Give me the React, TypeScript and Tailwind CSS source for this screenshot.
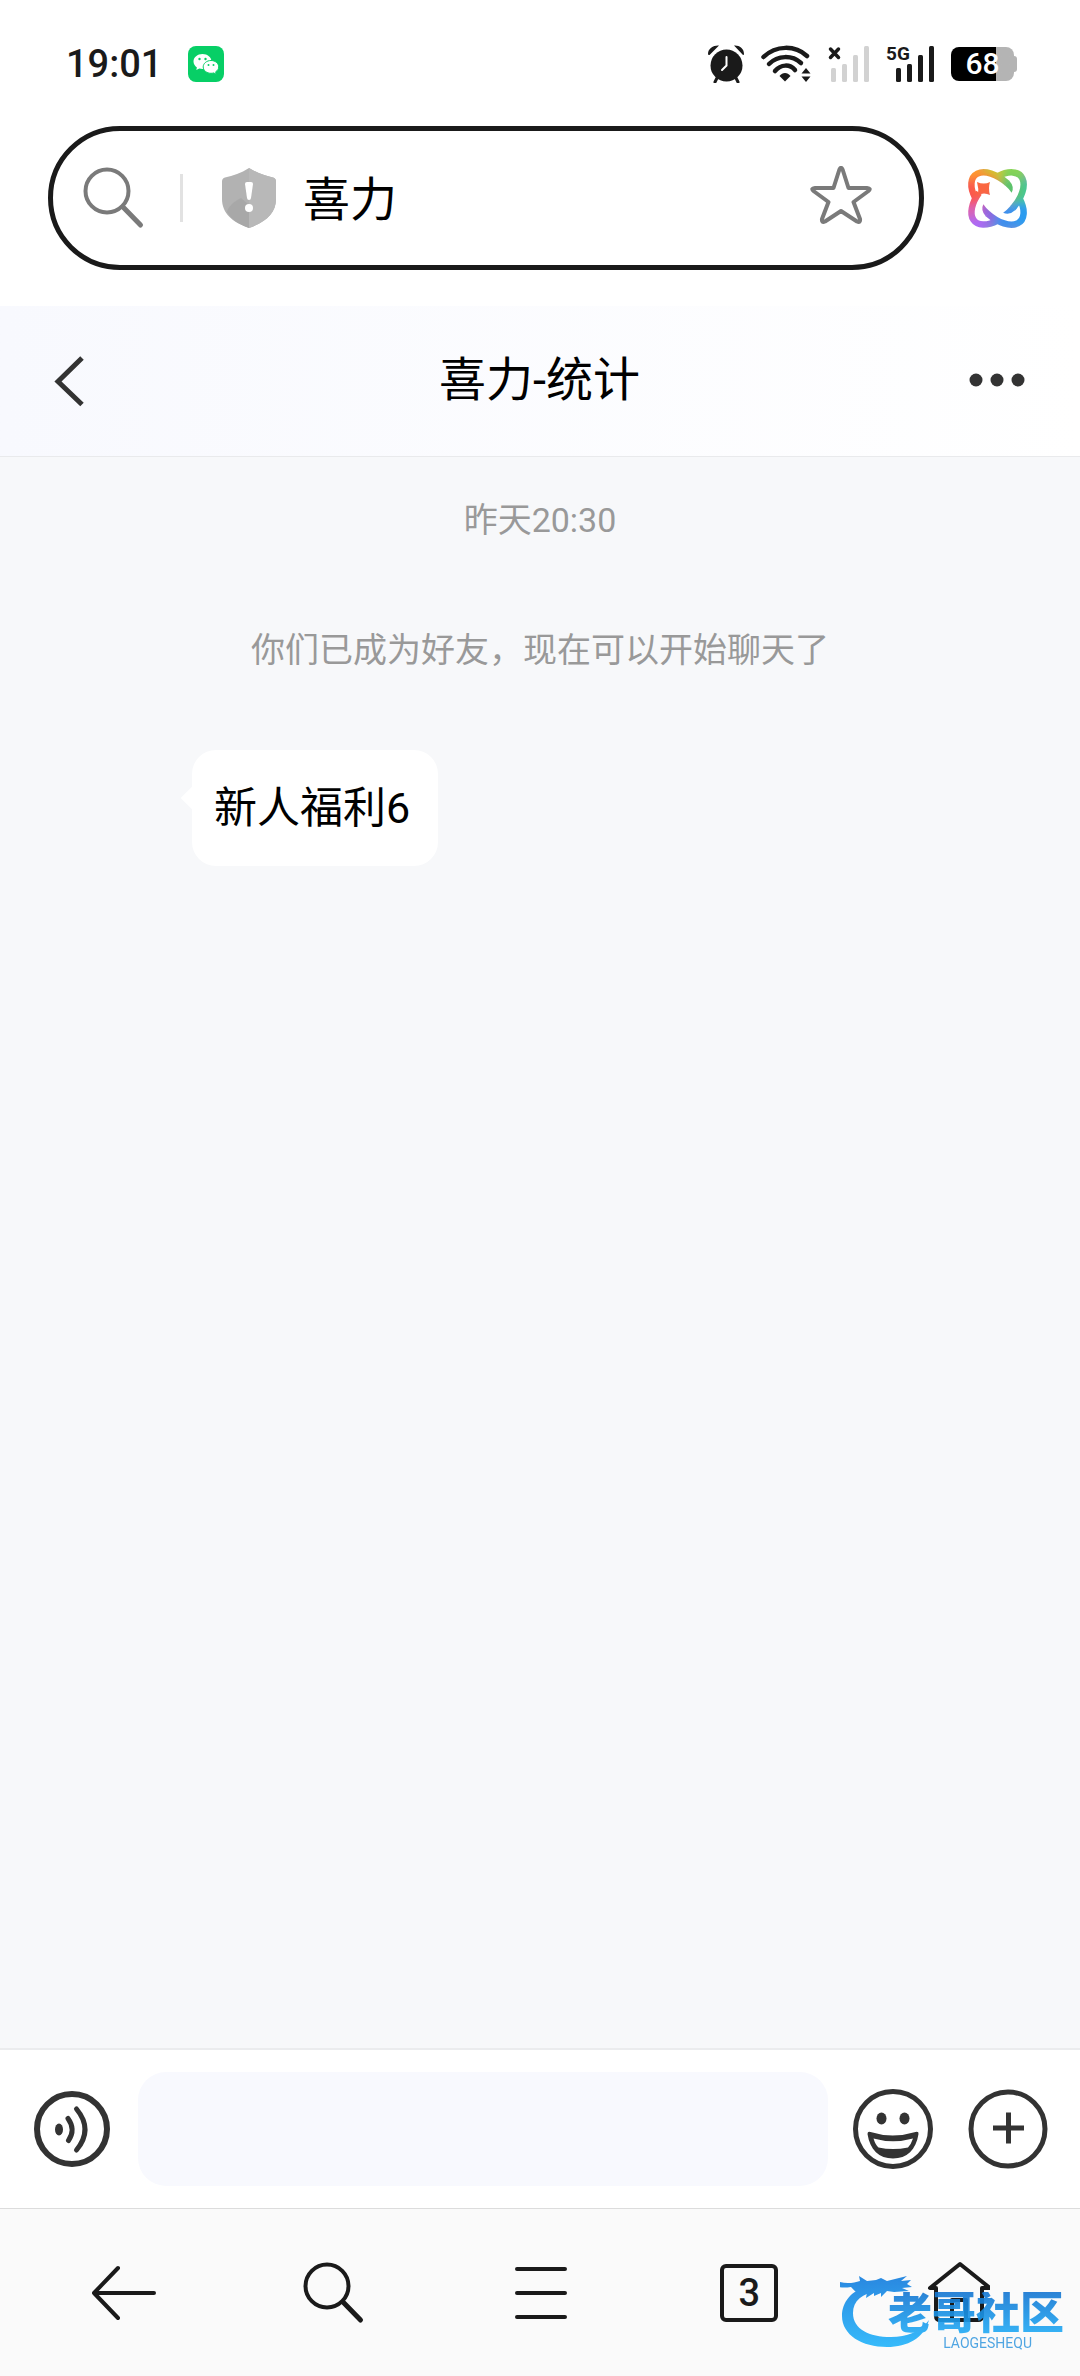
import { useState } from 'react';

function WeChatIcon() {
  return (
    <svg viewBox="0 0 36 36" className="w-9 h-9" aria-hidden="true">
      <rect width="36" height="36" rx="8" fill="#07cf66" />
      <path d="M14.500 8C9.500 8 5.500 11.300 5.500 15.500c0 2.400 1.300 4.500 3.400 5.900L8.300 24l3-1.500c1 .3 2.100.5 3.200.5 5 0 9-3.300 9-7.500S19.500 8 14.500 8z" fill="#fff" />
      <path d="M23 14.500c-4.300 0-7.800 2.900-7.800 6.400s3.500 6.400 7.800 6.400c.9 0 1.800-.1 2.600-.4l2.600 1.300-.5-2.400c1.800-1.200 3-2.900 3-4.900 0-3.500-3.400-6.400-7.700-6.400z" fill="#fff" stroke="#07cf66" strokeWidth="1" />
      <g fill="#07cf66">
        <circle cx="11.500" cy="13" r="1.200" />
        <circle cx="17.500" cy="13" r="1.200" />
        <circle cx="20.500" cy="19" r="1" />
        <circle cx="25.500" cy="19" r="1" />
      </g>
    </svg>
  );
}

function AlarmIcon() {
  return (
    <svg viewBox="0 0 36 38" className="w-9 h-[38px]" aria-hidden="true">
      <path d="M9 33l-2 4M28 33l2 4" stroke="#1a1a1a" strokeWidth="3" strokeLinecap="round" />
      <circle cx="18.500" cy="20.500" r="16" fill="#1a1a1a" />
      <path d="M0 9C0 3 6 0 11 .5L1.500 10C.5 10 0 9.700 0 9zM36 9c0-6-5-9-10-8.500L35 10c.7 0 1-.5 1-1z" fill="#1a1a1a" />
      <path d="M18.500 12v8.500L14 25" fill="none" stroke="#fff" strokeWidth="2" strokeLinecap="round" />
    </svg>
  );
}

function WifiIcon() {
  return (
    <svg viewBox="0 0 50 38" className="w-[50px] h-[38px]" aria-hidden="true">
      <g fill="none" stroke="#1a1a1a" strokeWidth="4.500" strokeLinecap="round">
        <path d="M2.500 12C15 0 34 0 46 11" />
        <path d="M8 19C17 10 31 10 40 18" />
        <path d="M14 26C20 19 29 19 34 25" />
      </g>
      <path d="M18.500 31c3-4 8-4 11 0L24 36.500z" fill="#1a1a1a" />
      <path d="M40.500 28.500L45 23l4.500 5.500zM40.500 31.500h9L45 37z" fill="#1a1a1a" />
    </svg>
  );
}

function SignalBars() {
  return (
    <>
      <rect y="22" width="5" height="14" rx="1.500" />
      <rect x="11" y="18" width="5" height="18" rx="1.500" />
      <rect x="22" y="9" width="5" height="27" rx="1.500" />
      <rect x="33" width="5" height="36" rx="1.500" />
    </>
  );
}

function NoSignalIcon() {
  return (
    <svg viewBox="0 0 41 38" className="w-[41px] h-[38px]" aria-hidden="true">
      <g transform="translate(3 1)" fill="#d2d2d2"><SignalBars /></g>
      <path d="M2.500 4l8 8.500M10.500 4l-8 8.500" stroke="#1a1a1a" strokeWidth="3.500" strokeLinecap="round" />
    </svg>
  );
}

function SignalIcon() {
  return (
    <svg viewBox="0 0 48 38" className="w-12 h-[38px] overflow-visible" aria-label="5G">
      <g transform="translate(10 1)" fill="#1a1a1a"><SignalBars /></g>
      <text x="0" y="15" fontSize="19" fontWeight="700" fill="#1a1a1a" stroke="#fff" strokeWidth="2" paintOrder="stroke" className="font-['Roboto',sans-serif]">5G</text>
    </svg>
  );
}

function Battery() {
  return (
    <div className="flex items-center">
      <div className="w-[63px] h-[34px] rounded-lg bg-linear-to-r from-black from-72% to-[#b4b4b4] to-72% flex items-center justify-center text-white text-[30px] leading-8 font-medium">
        68
      </div>
      <div className="w-[3px] h-4 bg-[#b4b4b4] rounded-r-md" />
    </div>
  );
}

function SearchIcon({ width }: { width: number }) {
  return (
    <svg viewBox="0 0 64 64" className="w-16 h-16" fill="none" stroke="currentColor" strokeLinecap="round" aria-hidden="true">
      <circle cx="26" cy="25" r="21.500" strokeWidth={width} />
      <path d="M42 41l17.500 18" strokeWidth={width + 1} />
    </svg>
  );
}

function ShieldIcon() {
  return (
    <svg viewBox="0 0 56 62" className="w-14 h-[62px]" aria-hidden="true">
      <path d="M28 1c8 5 16 8 24 9.500q3 .8 3 4V32c0 14-10 23-27 29C11 55 1 46 1 32V14.500q0-3.200 3-4C12 9 20 6 28 1z" fill="#b2b2b2" />
      <path d="M28 1c8 5 16 8 24 9.500q3 .8 3 4V32c0 14-10 23-27 29z" fill="#b8b8b8" />
      <path d="M20 31c-8 4-13 9-14 14 4 7 11 12 22 16V38z" fill="#a8a8a8" />
      <path d="M24 17q0-2 2-2h4q2 0 2 2l-2 14q-.3 2-2 2t-2-2z" fill="#fff" />
      <circle cx="28" cy="41" r="4" fill="#fff" />
    </svg>
  );
}

function StarIcon() {
  return (
    <svg viewBox="0 3 64 64" className="w-16 h-16" aria-hidden="true">
      <path d="M30.400 6.500q1.600-3.500 3.200 0L39.500 25H58q4.500.4 1.500 3L44.500 39 51 56q.6 4-3 2.500L32 48 16 58.500q-3.600 1.500-3-2.500l6.500-17L4.500 28Q1.500 25.400 6 25h18.500z" fill="none" stroke="#7a7a7a" strokeWidth="4" strokeLinejoin="round" />
    </svg>
  );
}

const logoColors = [
  { x: 18, y: 16, c: '#ff9a2e' },
  { x: 40, y: 16, c: '#d3c32c' },
  { x: 58, y: 14, c: '#86d455' },
  { x: 68, y: 34, c: '#42c99a' },
  { x: 54, y: 32, c: '#5cc26c' },
  { x: 66, y: 58, c: '#2a9cf0' },
  { x: 48, y: 60, c: '#3b90ee' },
  { x: 28, y: 56, c: '#8d66dd' },
  { x: 18, y: 66, c: '#ab6af5' },
  { x: 14, y: 48, c: '#d765b8' },
  { x: 16, y: 34, c: '#fb5550' },
  { x: 30, y: 30, c: '#fa6541' },
];

// One lobe of the crossed orbits: an elliptic arc that ends in a tapered tip
function OrbitLobe() {
  return (
    <>
      <path d="M-15.600 15.600A32.200 17.800 0 0 1 -4 -17.700" fill="none" stroke="#fff" strokeWidth="6.500" />
      <path d="M-4.500 -20.900Q4 -20.500 6 -14Q2 -15 -4.500 -14.500z" fill="#fff" />
    </>
  );
}

function OrbitLogo() {
  return (
    <svg viewBox="0 0 80 80" className="w-20 h-20" aria-hidden="true">
      <defs>
        <filter id="soften" x="-20%" y="-20%" width="140%" height="140%">
          <feGaussianBlur stdDeviation="4" />
        </filter>
        <mask id="orbits" maskUnits="userSpaceOnUse" x="0" y="0" width="80" height="80">
          <g transform="translate(41.500 40.500)">
            <g transform="rotate(45)"><OrbitLobe /></g>
            <g transform="rotate(135)"><OrbitLobe /></g>
            <g transform="rotate(225)"><OrbitLobe /></g>
            <path transform="rotate(-45)" d="M-15.600 15.600A32.200 17.800 0 0 1 -9 -17.100" fill="none" stroke="#fff" strokeWidth="6.500" />
          </g>
          <path d="M21 24q7 3 13 0-2 6 0 13-6-3-12 0 1-6-1-13z" fill="#fff" />
        </mask>
      </defs>
      <g mask="url(#orbits)">
        <rect width="80" height="80" fill="#8a8fd0" />
        <g filter="url(#soften)">
          {logoColors.map((p) => (
            <circle key={p.c} cx={p.x} cy={p.y} r="13" fill={p.c} />
          ))}
        </g>
      </g>
    </svg>
  );
}

function VoiceIcon() {
  return (
    <svg viewBox="0 0 76 76" className="w-[76px] h-[76px]" fill="none" stroke="#333" aria-hidden="true">
      <circle cx="38" cy="38" r="35" strokeWidth="6" />
      <ellipse cx="25" cy="38.500" rx="4" ry="6" fill="#333" stroke="none" />
      <path d="M34 27.500q8 11 0.500 22M42.500 18q17 20.500 0 41" strokeWidth="5" strokeLinecap="round" />
    </svg>
  );
}

function SmileIcon() {
  return (
    <svg viewBox="0 0 80 80" className="w-20 h-20" aria-hidden="true">
      <circle cx="40" cy="40" r="37.500" fill="none" stroke="#333" strokeWidth="5" />
      <ellipse cx="28.500" cy="29.500" rx="5" ry="6" fill="#333" />
      <ellipse cx="51.500" cy="29.500" rx="5" ry="6" fill="#333" />
      <path d="M14.500 45q0-3 3-2 22 7 45 0 3.500-.7 3 2C63 61 54 69.500 40 69.500S17 61 14.500 45zM20.500 49.500q2 6.500 5 9 14.500 3 29.500 0 3-3 5-9-20 5.500-39.500 0z" fill="#333" fillRule="evenodd" />
    </svg>
  );
}

function PlusIcon() {
  return (
    <svg viewBox="0 0 80 80" className="w-20 h-20" fill="none" stroke="#333" strokeWidth="5" aria-hidden="true">
      <circle cx="40" cy="40" r="37" />
      <path d="M40.500 23.500v31M25 39h31" />
    </svg>
  );
}

function DragonMark() {
  return (
    <svg viewBox="0 0 92 78" className="w-[92px] h-[78px] shrink-0" aria-hidden="true">
      <defs>
        <linearGradient id="dragon" x1="0" y1="0" x2="0" y2="78" gradientUnits="userSpaceOnUse">
          <stop offset="0" stopColor="#1279dc" />
          <stop offset="1" stopColor="#22b6fc" />
        </linearGradient>
      </defs>
      <g fill="url(#dragon)">
        <path d="M38 12C16 14 2 27 2 44c0 19 20 31 45 31 21 0 37-9 42-27-9 12-22 17-38 17-22 0-38-8-38-24 0-12 9-20 26-22z" />
        <path d="M0 10c7 2 14 1 20-1l-1-5 8 5 9-1 5-2 6 3 20-5-6 5 10-1-4 4 5 3-10 1 7 3-15 1-7-1-6 6 0-4-7 3 0-3-8 5 1-6-7 2c-4-1-6-4-9-7-7 1-14 1-21-3z" />
      </g>
    </svg>
  );
}

function Watermark() {
  return (
    <div className="absolute right-4 bottom-[26px] flex items-start pointer-events-none opacity-90">
      <DragonMark />
      <div className="-ml-11 pt-5 flex flex-col items-end">
        <div className="text-[44px] leading-[44px] font-black text-transparent bg-clip-text bg-linear-to-b from-[#1576d2] to-[#22aef8]">
          老哥社区
        </div>
        <div className="text-sm leading-[14px] pr-8 text-[#3d9ce0]">LAOGESHEQU</div>
      </div>
    </div>
  );
}

export default function App() {
  const [keyword, setKeyword] = useState('喜力');
  const [message, setMessage] = useState('');

  return (
    <div className="min-h-screen flex flex-col bg-white text-black font-['Roboto','Noto_Sans_CJK_SC',sans-serif]">
      <div className="flex items-end justify-between h-[88px] pl-[66px] pr-[63px]">
        <div className="flex items-center gap-[26px] h-12">
          <span className="text-[38px] leading-[48px] font-medium text-[#1a1a1a]">19:01</span>
          <WeChatIcon />
        </div>
        <div className="flex items-center gap-[17px] h-12">
          <AlarmIcon />
          <WifiIcon />
          <NoSignalIcon />
          <SignalIcon />
          <Battery />
        </div>
      </div>

      <div className="flex items-center gap-8 pt-[38px] pb-9 pl-12 pr-11">
        <form className="flex-1 min-w-0 h-36 flex items-center border-5 border-[#1a1a1a] rounded-full pl-7 pr-[46px]" onSubmit={(e) => e.preventDefault()}>
          <button type="submit" aria-label="搜索" className="text-[#7a7a7a]">
            <SearchIcon width={4} />
          </button>
          <div className="w-[3px] h-12 bg-[#e2e2e2] ml-[35px] mr-[38px]" />
          <ShieldIcon />
          <input
            aria-label="网址"
            className="flex-1 min-w-0 ml-[26px] pt-1 text-[47px] leading-[60px] outline-none"
            value={keyword}
            onChange={(e) => setKeyword(e.target.value)}
          />
          <button type="button" aria-label="收藏">
            <StarIcon />
          </button>
        </form>
        <button aria-label="AI 助手">
          <OrbitLogo />
        </button>
      </div>

      <header className="flex items-center justify-between h-[151px] pl-12 pr-[55px] pb-0.5 border-b border-[#e9eaec] bg-linear-to-r from-[#f8f9fe] to-white">
        <button aria-label="返回" className="w-[62px] pt-0.5">
          <svg viewBox="0 0 44 52" className="w-11 h-[52px]" fill="none" stroke="#333" strokeWidth="5" aria-hidden="true">
            <path d="M34 3L10 26.500l24 23" />
          </svg>
        </button>
        <h1 className="text-[47px] leading-[60px]">喜力-统计</h1>
        <button aria-label="更多" className="w-14">
          <svg viewBox="0 0 56 14" className="w-14 h-3.5" fill="#333" aria-hidden="true">
            <circle cx="7" cy="7" r="6.500" />
            <circle cx="28" cy="7" r="6.500" />
            <circle cx="49" cy="7" r="6.500" />
          </svg>
        </button>
      </header>

      <main className="flex-1 bg-[#f7f8fa] pt-[38px] px-12">
        <p className="text-center text-[34px] leading-[50px] text-[#999]">昨天20:30</p>
        <p className="mt-20 text-center text-[34px] leading-[50px] text-[#999]">你们已成为好友，现在可以开始聊天了</p>
        <div className="mt-[75px] ml-36 flex">
          <div className="relative bg-white rounded-3xl pl-[22px] pr-7 py-7 text-[43px] leading-[60px]">
            <span className="absolute -left-2 top-10 w-4 h-4 bg-white rotate-45" />
            新人福利6
          </div>
        </div>
      </main>

      <div className="flex items-center h-40 border-t-2 border-[#ebecee] bg-white pl-[34px] pr-8">
        <button aria-label="语音">
          <VoiceIcon />
        </button>
        <input
          aria-label="消息"
          className="flex-1 min-w-0 h-[114px] ml-7 mr-[25px] px-6 rounded-[28px] bg-[#f8f9fe] text-[43px] outline-none"
          value={message}
          onChange={(e) => setMessage(e.target.value)}
        />
        <button aria-label="表情" className="mr-[35px]">
          <SmileIcon />
        </button>
        <button aria-label="添加">
          <PlusIcon />
        </button>
      </div>

      <nav className="relative h-[168px] border-t border-[#dcdcdc] bg-[#fafafa] pl-5 pr-[18px] text-[#1a1a1a]">
        <div className="grid grid-cols-5 justify-items-center items-center h-full">
          <button aria-label="后退">
            <svg viewBox="0 0 64 64" className="w-16 h-16" fill="none" stroke="currentColor" strokeWidth="4" strokeLinecap="round" strokeLinejoin="round" aria-hidden="true">
              <path d="M26 7L2 32l24 25M2 32h60" />
            </svg>
          </button>
          <button aria-label="搜索">
            <SearchIcon width={4} />
          </button>
          <button aria-label="菜单">
            <svg viewBox="0 0 64 64" className="w-16 h-16" stroke="currentColor" strokeWidth="4" strokeLinecap="round" aria-hidden="true">
              <path d="M8 8h48M8 32h48M8 56h48" />
            </svg>
          </button>
          <button aria-label="标签页" className="w-[58px] h-[58px] border-4 border-[#1a1a1a] rounded-md text-[38px] leading-[50px] font-medium">
            3
          </button>
          <button aria-label="主页">
            <svg viewBox="0 0 64 64" className="w-16 h-16" fill="none" stroke="currentColor" strokeWidth="4" strokeLinejoin="round" aria-hidden="true">
              <path d="M34 3L4 27h6v28q0 4 4 4h38q4 0 4-4V27h8z" />
              <path d="M26 59V39h14v20" />
            </svg>
          </button>
        </div>
        <Watermark />
      </nav>
    </div>
  );
}
